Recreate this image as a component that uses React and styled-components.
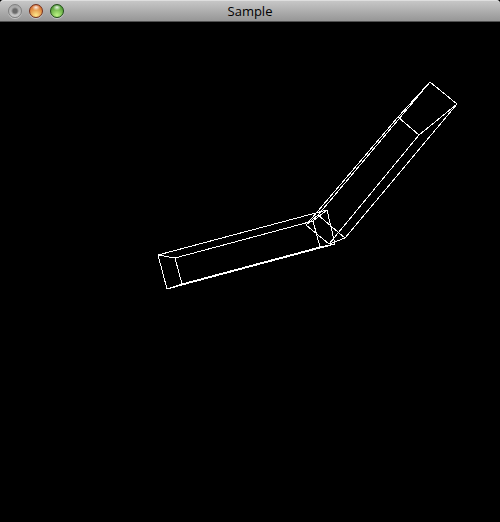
import React from "react";
import { createGlobalStyle, styled } from "styled-components";

const GlobalStyle = createGlobalStyle`
  body {
    margin: 0;
    background-color: #000000;
  }
`

// each box is two quads, the corners are joined in order
const boxes = [
  {
    name: "lower arm",
    front: [[158, 233], [327, 188], [335, 222], [167, 267]],
    back: [[175, 236], [313, 199], [320, 225], [182, 262]],
  },
  {
    name: "upper arm",
    front: [[430, 60], [457, 82], [345, 216], [318, 193]],
    back: [[398, 95], [419, 113], [329, 222], [306, 203]],
  },
]

const buttons = [
  { label: "Close", rim: "#808080", top: "#a4a4a4", bottom: "#c9c9c9", dot: true },
  { label: "Minimize", rim: "#74301c", top: "#d05c20", bottom: "#ffe88a" },
  { label: "Zoom", rim: "#214d18", top: "#3f8c28", bottom: "#bdf585" },
]

function Box({ front, back }) {
  return (
    <g>
      <polygon points={front.join(" ")} />
      <polygon points={back.join(" ")} />
      {front.map(([x, y], i) => (
        <line key={i} x1={x} y1={y} x2={back[i][0]} y2={back[i][1]} />
      ))}
    </g>
  )
}

export default function App() {
  return (
    <Window>
      <GlobalStyle />
      <TitleBar>
        <Controls>
          {buttons.map((b) => (
            <Light key={b.label} type="button" aria-label={b.label}
              $rim={b.rim} $top={b.top} $bottom={b.bottom} $dot={b.dot} />
          ))}
        </Controls>
        <Title>Sample</Title>
      </TitleBar>
      <Canvas viewBox="0 0 500 500" role="img" aria-label="Wireframe robot arm">
        {boxes.map((box) => (
          <Box key={box.name} front={box.front} back={box.back} />
        ))}
      </Canvas>
    </Window>
  )
}

const Window = styled.main`
  display: flex;
  flex-direction: column;
  background-color: #000000;
`
const TitleBar = styled.header`
  display: grid;
  grid-template-columns: 1fr auto 1fr;
  align-items: center;
  height: 22px;
  box-sizing: border-box;
  border-bottom: 1px solid #515151;
  border-radius: 4px 4px 0 0;
  background: linear-gradient(#c9c9c9, #969696);
  box-shadow: inset 0 1px 0 #dedede;
`
const Controls = styled.div`
  display: flex;
  gap: 7px;
  padding-left: 8px;
`
const Light = styled.button`
  width: 14px;
  height: 14px;
  padding: 0;
  border: 1px solid ${(p) => p.$rim};
  border-radius: 50%;
  background: ${(p) => p.$dot
    ? `radial-gradient(circle, #6a6a6a 2px, transparent 4px), linear-gradient(${p.$top}, ${p.$bottom})`
    : `radial-gradient(ellipse 4px 3px at 50% 20%, #ffffffdd, transparent),
       radial-gradient(circle at 50% 85%, ${p.$bottom}, ${p.$top} 90%)`};
  box-shadow: 0 1px 0 #c4c4c4;
`
const Title = styled.h1`
  margin: 0;
  color: #000000;
  font: 400 13px/20px "Open Sans", "Noto Sans", sans-serif;
`
const Canvas = styled.svg`
  display: block;
  width: 100%;
  fill: none;
  stroke: #ffffff;
  stroke-width: 1;
  shape-rendering: crispEdges;
`
